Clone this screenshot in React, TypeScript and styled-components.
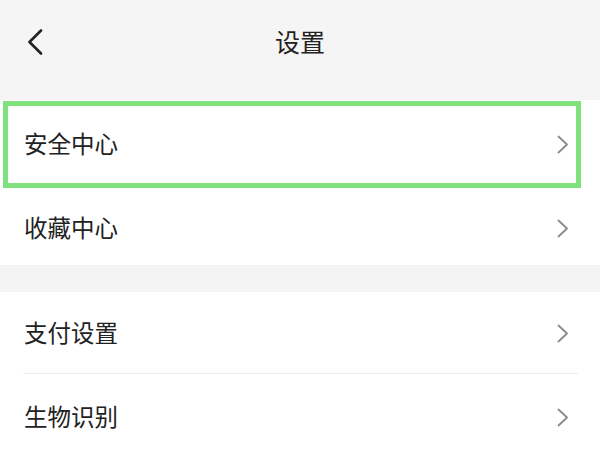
import styled, { createGlobalStyle } from "styled-components";

const GlobalStyle = createGlobalStyle`
  html, body {
    margin: 0;
    padding: 0;
    background: #ffffff;
  }
  body {
    width: 600px;
    height: 450px;
    overflow: hidden;
    font-family: "Noto Sans CJK SC", "Noto Sans", sans-serif;
    color: #222222;
  }
`;

const Page = styled.div`
  display: flex;
  flex-direction: column;
  width: 600px;
`;

const Header = styled.header`
  display: grid;
  grid-template-columns: 80px 1fr 80px;
  align-items: center;
  height: 100px;
  padding-bottom: 18px;
  box-sizing: border-box;
  background: #f5f5f5;
`;

const BackButton = styled.div`
  display: flex;
  align-items: center;
  padding-left: 27px;
  padding-top: 1px;
`;

const Title = styled.h1`
  margin: 0;
  text-align: center;
  font-size: 25px;
  font-weight: 400;
  line-height: 1;
  color: #222222;
`;

const Group = styled.section<{ $gap?: number }>`
  display: flex;
  flex-direction: column;
  background: #ffffff;
  margin-top: ${({ $gap }) => $gap ?? 0}px;
`;

const Gap = styled.div`
  height: 27px;
  background: #f4f4f4;
`;

const Row = styled.div<{ $height: number; $offset?: number; $divider?: boolean }>`
  position: relative;
  display: flex;
  align-items: center;
  justify-content: space-between;
  height: ${({ $height }) => $height}px;
  padding: ${({ $offset }) => $offset ?? 0}px 31px 0 24px;
  box-sizing: border-box;

  ${({ $divider }) =>
    $divider &&
    `
    &::after {
      content: "";
      position: absolute;
      left: 23px;
      right: 22px;
      bottom: 0;
      height: 1px;
      background: #ececec;
    }
  `}
`;

const Label = styled.span`
  font-size: 23.5px;
  line-height: 1;
  color: #222222;
`;

const Highlight = styled.div`
  position: absolute;
  left: 3px;
  right: 19px;
  top: 1px;
  bottom: -2px;
  border: 5px solid #80e27e;
  pointer-events: none;
`;

const BackIcon = () => (
  <svg width="16" height="26" viewBox="0 0 16 26" fill="none">
    <polyline
      points="14,1.5 2.5,13 14,24.5"
      stroke="#222222"
      strokeWidth="2.6"
      strokeLinecap="round"
      strokeLinejoin="round"
    />
  </svg>
);

const Chevron = () => (
  <svg width="12" height="19" viewBox="0 0 12 19" fill="none">
    <polyline
      points="1.5,1.5 10,9.5 1.5,17.5"
      stroke="#8a8a8a"
      strokeWidth="1.8"
      strokeLinecap="round"
      strokeLinejoin="round"
    />
  </svg>
);

type Item = { label: string; height: number; offset?: number; divider?: boolean; active?: boolean };

const firstGroup: Item[] = [
  { label: "安全中心", height: 86, offset: 2, active: true },
  { label: "收藏中心", height: 79, offset: 5 },
];

const secondGroup: Item[] = [
  { label: "支付设置", height: 82, offset: 0, divider: true },
  { label: "生物识别", height: 86, offset: 0 },
];

const SettingRow = ({ item }: { item: Item }) => (
  <Row $height={item.height} $offset={item.offset} $divider={item.divider}>
    <Label>{item.label}</Label>
    <Chevron />
    {item.active && <Highlight />}
  </Row>
);

export default function App() {
  return (
    <>
      <GlobalStyle />
      <Page>
        <Header>
          <BackButton>
            <BackIcon />
          </BackButton>
          <Title>设置</Title>
          <div />
        </Header>
        <Group>
          {firstGroup.map((item) => (
            <SettingRow key={item.label} item={item} />
          ))}
        </Group>
        <Gap />
        <Group>
          {secondGroup.map((item) => (
            <SettingRow key={item.label} item={item} />
          ))}
        </Group>
      </Page>
    </>
  );
}
